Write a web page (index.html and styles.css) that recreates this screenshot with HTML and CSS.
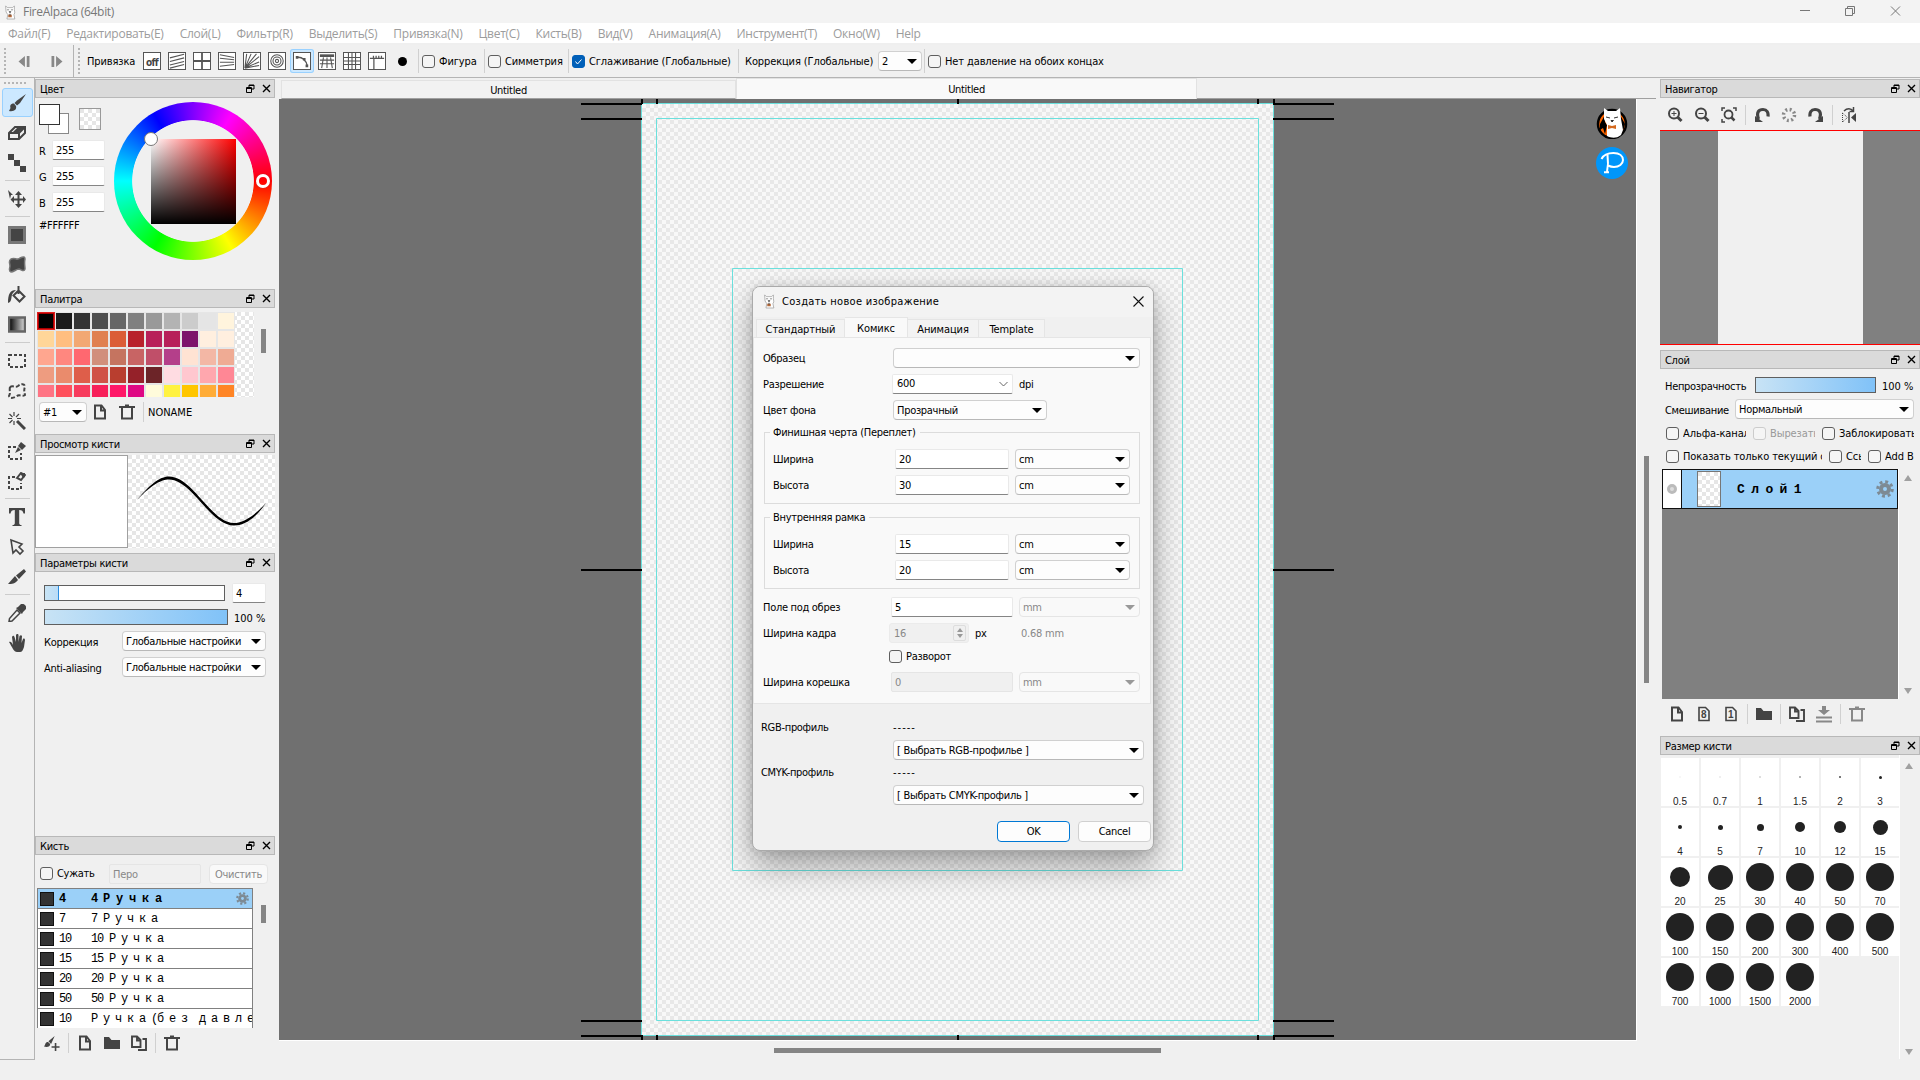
FILE: index.html
```html
<!DOCTYPE html>
<html lang="ru">
<head>
    <meta charset="UTF-8">
    <title>FireAlpaca (64bit)</title>
    <link rel="stylesheet" href="styles.css">
</head>

<body>
    <!-- Icons -->
    <svg class="defs">
        <symbol id="alpaca" viewBox="0 0 16 16">
            <path d="M3 1l2 2h6l2-2v4l.5 4-1 2 1 5h-9l1-5-2-3z" fill="#fff" stroke="#999" stroke-width=".8"/>
            <path d="M4.5 5.5h2.5M9 5.5h2.5M7 7.500h2l-1 1.500z" stroke="#666" stroke-width=".8"/>
            <path d="M6 11h4v3H6z" fill="#b3693a"/>
            <path d="M7.500 10h1v2h-1z" fill="#333"/>
        </symbol>
        <symbol id="float" viewBox="0 0 9 9">
            <path d="M3 3V1h5v4H6M3 1.500h5M.5 3.500h5v5h-5zM.5 4.500h5" fill="none" stroke="#000"/>
        </symbol>
        <symbol id="close" viewBox="0 0 9 9">
            <path d="M1 1l7 7M8 1L1 8" fill="none" stroke="#000" stroke-width="1.400"/>
        </symbol>
        <symbol id="page" viewBox="0 0 16 18">
            <path d="M3 2.500h6.500L13 7v8.500H3zM9 3v4.500h4" fill="none" stroke="#444" stroke-width="2"/>
        </symbol>
        <symbol id="sheet" viewBox="0 0 16 18">
            <path d="M3 2.500h6.500L13 6v9.500H3z" fill="none" stroke="#444" stroke-width="1.600"/>
        </symbol>
        <symbol id="trash" viewBox="0 0 16 18">
            <path d="M0 4h16M6 2.500h4M3 5v10.500h10V5" fill="none" stroke="currentColor" stroke-width="2"/>
        </symbol>
        <symbol id="folder" viewBox="0 0 16 18">
            <path d="M0 3h5l2.500 3H16v9H0z" fill="#444"/>
        </symbol>
        <symbol id="copy" viewBox="0 0 16 18">
            <path d="M1 2.500h5L9.500 6v7H1zM6 3v3.500h4M11.500 5H15v11H7" fill="none" stroke="#444" stroke-width="1.900"/>
        </symbol>
        <symbol id="gear" viewBox="0 0 18 18">
            <circle cx="9" cy="9" r="7.300" fill="none" stroke="#7d8a94" stroke-width="3" stroke-dasharray="2.900 2.830"/>
            <circle cx="9" cy="9" r="4" fill="none" stroke="#7d8a94" stroke-width="4"/>
        </symbol>
    </svg>

    <div class="titlebar">
        <svg class="logo"><use href="#alpaca"/></svg>
        <span>FireAlpaca (64bit)</span>
        <svg class="window-buttons" viewBox="0 0 102 20">
            <path d="M1 8.500h10M46.500 6.500h7v7h-7zM48.500 6.500v-2h7v7h-2M92 4.500l9 9M101 4.500l-9 9" fill="none" stroke="#777"/>
        </svg>
    </div>
    <div class="menubar">
        <span>Файл(F)</span><span>Редактировать(E)</span><span>Слой(L)</span><span>Фильтр(R)</span><span>Выделить(S)</span><span>Привязка(N)</span><span>Цвет(C)</span><span>Кисть(B)</span><span>Вид(V)</span><span>Анимация(A)</span><span>Инструмент(T)</span><span>Окно(W)</span><span>Help</span>
    </div>

    <div class="toolbar">
        <i class="grip"></i>
        <svg class="step" viewBox="0 0 12 12"><path d="M7 0v12L0 6zM9 0h3v12H9z"/></svg>
        <svg class="step" viewBox="0 0 12 12"><path d="M5 0v12l7-6zM0 0h3v12H0z"/></svg>
        <i class="line full"></i>
        <i class="grip"></i>
        <span class="snap-label">Привязка</span>
        <div class="snaps">
            <div class="snap off"><b>off</b></div>
            <div class="snap"><svg viewBox="0 0 18 18"><path d="M1 5.500l16-4M1 9.500l16-4M1 13.500l16-4M1 17l16-4"/></svg></div>
            <div class="snap"><svg viewBox="0 0 18 18"><path d="M9 0v18M0 9h18" stroke-width="2"/></svg></div>
            <div class="snap"><svg viewBox="0 0 18 18"><path d="M1 2l16 3M1 6l16 1.500M1 10.500h16M1 15l16-2"/></svg></div>
            <div class="snap"><svg viewBox="0 0 18 18"><path d="M1 17L3 1M1 17L8 1M1 17L14 1M1 17L17 4M1 17l16-7M1 17l16-3"/></svg></div>
            <div class="snap"><svg viewBox="0 0 18 18"><circle cx="9" cy="9" r="7"/><circle cx="9" cy="9" r="4.500"/><circle cx="9" cy="9" r="1.800"/></svg></div>
            <div class="snap active"><svg viewBox="0 0 18 18"><path d="M3 5c6-1 11 3 12 10" stroke-width="1.600"/><path d="M2 3.500h3v3H2zM10 5.500h3v3h-3zM13 13h3v3h-3z" fill="#555" stroke="none"/></svg></div>
            <div class="snap"><svg viewBox="0 0 18 18"><path d="M1 3h16" stroke-width="3"/><path d="M1 8h16M1 12h16M5 5L3 17M9 5v12M13 5l2 12"/></svg></div>
            <div class="snap"><svg viewBox="0 0 18 18"><path d="M5 0v18M9 0v18M13 0v18M0 5h18M0 9h18M0 13h18"/></svg></div>
            <div class="snap"><svg viewBox="0 0 18 18"><path d="M1 6h16M5.500 6v12M5 3v3M8 3v3M11 3v3M14 3v3" stroke-width="1.400"/></svg></div>
        </div>
        <i class="dot"></i>
        <i class="line"></i>
        <label class="w66"><i class="check"></i>Фигура</label>
        <i class="line"></i>
        <label class="w83"><i class="check"></i>Симметрия</label>
        <i class="line"></i>
        <label class="w170"><i class="check on"><svg viewBox="0 0 13 13"><path d="M3.500 6.500l2 2.500 4-4.500" fill="none" stroke="#fff"/></svg></i>Сглаживание (Глобальные)</label>
        <i class="line"></i>
        <span class="corr">Коррекция (Глобальные)</span>
        <div class="combo corr-combo">2</div>
        <i class="line near"></i>
        <label><i class="check"></i>Нет давление на обоих концах</label>
    </div>

    <div class="main">
        <div class="tools" id="tools">
            <i class="grip-h"></i>
            <div class="tool active"><svg viewBox="0 0 18 18"><path d="M18 0L9 6.500 6.500 9l2.500 2.500L12 9z"/><path d="M6 9.500c-4 0-4 2.500-3.500 4.500L1 17c5 1 8-1.500 7-5z"/></svg></div>
            <div class="tool"><svg viewBox="0 0 18 18"><path d="M1 9l6-6h10v6l-6 6H1z" fill="none" stroke="#444" stroke-width="2"/><path d="M1 9h10l6-6M11 9v6" fill="none" stroke="#444" stroke-width="2"/><path d="M5 8l4-4h7l-5 4z"/></svg></div>
            <div class="tool"><svg viewBox="0 0 18 18"><path d="M0 0h6v6H0zM6 6h6v6H6zM12 12h6v6h-6z"/></svg></div>
            <i class="sep"></i>
            <div class="tool"><svg viewBox="0 0 18 18"><path d="M0 0l5 5H3l-1 4z"/><path d="M10.500 4v11M5 9.500h11" fill="none" stroke="#444" stroke-width="2"/><path d="M10.500 1L14 5H7zM10.500 18L14 14H7zM2.500 9.500L6 6v7zM18 9.500L15 6v7z"/></svg></div>
            <i class="sep"></i>
            <div class="tool"><svg viewBox="0 0 18 18"><path d="M1.500 1.500h15v15h-15z" stroke="#777" stroke-width="3"/></svg></div>
            <div class="tool"><svg viewBox="0 0 18 18"><path d="M3 3c4-2 6 2 9-1 4-2 5-1 5 1-1 4 0 7 0 10-1 3-3 1-6 0-3 0-5 3-8 3-3-1-1-4-1-6 0-3-2-5 1-7z" stroke="#777" stroke-width="1.500"/></svg></div>
            <div class="tool"><svg viewBox="0 0 18 18"><path d="M10.500 4.500l6 6-5 5-6-6zM10.500 8V0" fill="none" stroke="#444" stroke-width="2"/><path d="M0 17C0 8 2 4 8 4L5 7C3 9 4 14 2 16z"/></svg></div>
            <div class="tool"><svg viewBox="0 0 18 18"><defs><linearGradient id="gr"><stop offset="0"/><stop offset="1" stop-color="#ddd"/></linearGradient></defs><path d="M1 1.500h16v14H1z" fill="url(#gr)" stroke="#666" stroke-width="2.500"/></svg></div>
            <i class="sep"></i>
            <div class="tool"><svg viewBox="0 0 18 18"><path d="M1 3h16v12H1z" fill="none" stroke="#444" stroke-width="2" stroke-dasharray="3 2"/></svg></div>
            <div class="tool"><svg viewBox="0 0 18 18"><path d="M2 5c3-2 5 1 8-1 4-3 7-2 7 1-1 2-1 4 0 8-3 2-6-1-8 1-3 2-7 3-8 0 2-4 0-5 1-9z" fill="none" stroke="#444" stroke-width="2" stroke-dasharray="4 2"/></svg></div>
            <div class="tool"><svg viewBox="0 0 18 18"><path d="M9 9l8 8" fill="none" stroke="#444" stroke-width="3"/><path d="M6 0v4M6 9v4M0 6.500h4M9 6.500h4M1.500 2l3 3M11 2L8 5M1.500 11l3-3" fill="none" stroke="#444" stroke-width="1.200"/></svg></div>
            <div class="tool"><svg viewBox="0 0 18 18"><path d="M8 5H1v12h12v-6" fill="none" stroke="#444" stroke-width="2" stroke-dasharray="3 2"/><path d="M13 0l5 4-4 4-4-4zM10 5l3 3-6 3z"/></svg></div>
            <div class="tool"><svg viewBox="0 0 18 18"><path d="M7 5H1v12h12v-6" fill="none" stroke="#444" stroke-width="2" stroke-dasharray="3 2"/><path d="M9 6l4-5 4 2-4 5z" fill="none" stroke="#444" stroke-width="2"/><path d="M12 1h5v4l-2 1z"/></svg></div>
            <i class="sep"></i>
            <div class="tool"><svg viewBox="0 0 18 18"><path d="M1 0h16v5.500h-1.500C15 3 14 2 11.200 2v13c0 1.500.8 2 2.300 2v1h-9v-1c1.500 0 2.300-.5 2.300-2V2C4 2 3 3 2.500 5.500H1z"/></svg></div>
            <div class="tool"><svg viewBox="0 0 18 18"><path d="M3 2l11 4-3 3 4 4-3 3-4-4-3 3z" fill="none" stroke="#444" stroke-width="1.600"/></svg></div>
            <div class="tool"><svg viewBox="0 0 18 18"><path d="M16 1l2 2.500L11 11 8 7.500zM7 8l3 4c-3 4-6 4-10 4z"/></svg></div>
            <i class="sep"></i>
            <div class="tool"><svg viewBox="0 0 18 18"><path d="M9 6l3 3-8 8-3 .500.500-3z" fill="none" stroke="#444" stroke-width="1.500"/><path d="M8 4l2-1 3-3c3-1 6 2 5 5l-3 3-1 2z"/></svg></div>
            <div class="tool"><svg viewBox="0 0 18 18"><path d="M1 8c2-1 3 1 4 3L4 3c1-2 2-1 2.500 0L8 8V1c1-1.500 2-1.500 2.500 0v7l1-6c1-1 2-1 2.500 0l-.5 7L15 5c1-1 2 0 2 1l-1 7c-1 3-2 5-4 5H9c-3 0-5-5-8-10z"/></svg></div>
        </div>

        <div class="dock left">
            <section class="panel color-panel">
                <h2>Цвет<svg class="fl"><use href="#float"/></svg><svg class="cl"><use href="#close"/></svg></h2>
                <div class="color-body">
                    <div class="color-side">
                        <div class="swatches">
                            <div class="fore-back"><i class="back"></i><i class="fore"></i></div>
                            <i class="none checker"></i>
                        </div>
                        <div class="rgb"><span>R</span><div class="input">255</div></div>
                        <div class="rgb"><span>G</span><div class="input">255</div></div>
                        <div class="rgb"><span>B</span><div class="input">255</div></div>
                        <div class="hex">#FFFFFF</div>
                    </div>
                    <div class="wheel">
                        <div class="square"></div>
                        <i class="pick"></i>
                        <i class="hue"></i>
                    </div>
                </div>
            </section>

            <section class="panel palette-panel">
                <h2>Палитра<svg class="fl"><use href="#float"/></svg><svg class="cl"><use href="#close"/></svg></h2>
                <div class="scroll-row">
                    <div class="palette checker" id="palette"></div>
                    <i class="thumb palette-thumb"></i>
                </div>
                <div class="palette-bar">
                    <div class="combo">#1</div>
                    <svg class="icon"><use href="#page"/></svg>
                    <svg class="icon trash"><use href="#trash"/></svg>
                    <i class="bar"></i>
                    <span>NONAME</span>
                </div>
            </section>

            <section class="panel preview-panel">
                <h2>Просмотр кисти<svg class="fl"><use href="#float"/></svg><svg class="cl"><use href="#close"/></svg></h2>
                <div class="preview">
                    <div class="dab"></div>
                    <svg class="stroke checker" viewBox="0 0 147 93">
                        <path d="M9 45C24 27 33 21.500 41 21.500c24 0 42 46.500 65 46.500 8 0 18-5 32-20-12 17-22 22.500-32 22.500C82 70.500 64 24.500 41 24.500c-8 0-17 5-32 20.500z"/>
                    </svg>
                </div>
            </section>

            <section class="panel params-panel">
                <h2>Параметры кисти<svg class="fl"><use href="#float"/></svg><svg class="cl"><use href="#close"/></svg></h2>
                <div class="size-row"><div class="slider"><i></i></div><div class="input">4</div></div>
                <div class="opacity-row"><div class="slider filled"></div><span>100 %</span></div>
                <div class="param"><span>Коррекция</span><div class="combo">Глобальные настройки</div></div>
                <div class="param"><span>Anti-aliasing</span><div class="combo">Глобальные настройки</div></div>
            </section>

            <section class="panel brush-panel">
                <h2>Кисть<svg class="fl"><use href="#float"/></svg><svg class="cl"><use href="#close"/></svg></h2>
                <div class="filter">
                    <label><i class="check"></i>Сужать</label>
                    <div class="input disabled">Перо</div>
                    <div class="clear">Очистить</div>
                </div>
                <div class="scroll-row">
                    <div class="brushes">
                        <div class="brush selected"><i></i><span>4</span><em>4 <u>Ручка</u></em><svg><use href="#gear"/></svg></div>
                        <div class="brush"><i></i><span>7</span><em>7 <u>Ручка</u></em></div>
                        <div class="brush"><i></i><span>10</span><em>10 <u>Ручка</u></em></div>
                        <div class="brush"><i></i><span>15</span><em>15 <u>Ручка</u></em></div>
                        <div class="brush"><i></i><span>20</span><em>20 <u>Ручка</u></em></div>
                        <div class="brush"><i></i><span>50</span><em>50 <u>Ручка</u></em></div>
                        <div class="brush"><i></i><span>10</span><em><u>Ручка</u>(<u>без</u> <u>давле</u></em></div>
                    </div>
                    <i class="thumb brush-thumb"></i>
                </div>
                <div class="brush-bar">
                    <svg class="icon" viewBox="0 0 18 18"><path d="M12 1L5 7l3 3zM4.500 8C1 8 2 11 0 13c4 1 7 0 7-3z" fill="#444"/><path d="M13 9v9M8.500 13.500h9" stroke="#444" stroke-width="1.800"/></svg>
                    <i class="bar"></i>
                    <svg class="icon"><use href="#page"/></svg>
                    <svg class="icon"><use href="#folder"/></svg>
                    <svg class="icon"><use href="#copy"/></svg>
                    <i class="bar"></i>
                    <svg class="icon"><use href="#trash"/></svg>
                </div>
            </section>
        </div>

        <div class="workspace">
            <div class="tabs">
                <div class="tab">Untitled</div>
                <div class="tab current">Untitled</div>
                <div class="rest"></div>
            </div>
            <div class="view">
                <div class="canvas">
                    <div class="sheet"></div>
                    <svg class="guides" viewBox="0 0 1357 941">
                        <g fill="none" stroke="#6be0dd">
                            <path d="M362.500 4.500h632v932h-632zM377.500 19.500h602v902h-602zM453.500 169.500h450v602h-450z"/>
                        </g>
                        <g fill="none" stroke="#000" stroke-width="2">
                            <path d="M302 5h61M302 20h61M302 471h61M302 922h61M302 937h61M994 5h61M994 20h61M994 471h61M994 922h61M994 937h61"/>
                            <path d="M363 0v5M378 0v5M679 0v5M979 0v5M995 0v5M363 936v5M378 936v5M679 936v5M979 936v5M995 936v5"/>
                        </g>
                    </svg>
                    <div class="links">
                        <svg viewBox="0 0 32 32">
                            <circle cx="16" cy="17" r="14" fill="#f60" stroke="#000" stroke-width="2.500"/>
                            <path d="M4 17l6-11-1 9 2 3-2 9-2-6-3 2zM29 17l-6-11 2 8-1 5 2 8 2-6z"/>
                            <path d="M8 1l4 3h8l4-3 1 11 2 11-2 5c-5 4-10 3-14 1V18l-3-6z" fill="#fff"/>
                            <path d="M10 10l4 1M18 11l4-1M15 13.500h2.500L16 15z" fill="none" stroke="#333"/>
                            <path d="M12 18l4 1 4-1v4l-4-1-4 1z" fill="#d4691e"/>
                        </svg>
                        <svg viewBox="0 0 32 32">
                            <circle cx="16" cy="16" r="16" fill="#0096fa"/>
                            <path d="M5.500 12c2-4 7-6 12-6 6 0 9.500 3 9.500 7s-4 7-9 7c-2 0-4-.5-6-1.500M11.500 8c1 7 .5 12-.5 17M8 25.200h5" fill="none" stroke="#fff" stroke-width="2"/>
                        </svg>
                    </div>
                </div>
                <i class="thumb v-thumb"></i>
            </div>
            <i class="thumb h-thumb"></i>
        </div>

        <div class="dock right">
            <section class="panel nav-panel">
                <h2>Навигатор<svg class="fl"><use href="#float"/></svg><svg class="cl"><use href="#close"/></svg></h2>
                <div class="nav-bar">
                    <svg viewBox="0 0 16 16"><circle cx="7" cy="6.500" r="5" fill="none" stroke="#444" stroke-width="2"/><path d="M10.500 10l4 4" stroke="#444" stroke-width="3"/><path d="M4.500 6.500h5M7 4v5" stroke="#444"/></svg>
                    <svg viewBox="0 0 16 16"><circle cx="7" cy="6.500" r="5" fill="none" stroke="#444" stroke-width="2"/><path d="M10.500 10l4 4" stroke="#444" stroke-width="3"/><path d="M4.500 6.500h5" stroke="#444"/></svg>
                    <svg viewBox="0 0 16 16"><circle cx="7.500" cy="7.500" r="4" fill="none" stroke="#444" stroke-width="1.800"/><path d="M10.500 10.500l3 3" stroke="#444" stroke-width="2.500"/><path d="M1 4V1h3M12 1h3v3M1 12v3h3" fill="none" stroke="#444" stroke-width="1.500"/></svg>
                    <i class="bar"></i>
                    <svg viewBox="0 0 16 16"><path d="M4.500 12C2 5 5 2.500 9 2.500c4 0 5.500 3 5 7" fill="none" stroke="#444" stroke-width="3.200"/><path d="M1 9v6h8z" fill="#444"/></svg>
                    <svg viewBox="0 0 16 16"><circle cx="8" cy="8" r="5.500" fill="none" stroke="#888" stroke-width="3.500" stroke-dasharray="1.900 2.420"/></svg>
                    <svg viewBox="0 0 16 16"><path d="M11.500 12C14 5 11 2.500 7 2.500c-4 0-5.500 3-5 7" fill="none" stroke="#444" stroke-width="3.200"/><path d="M15 9v6H7z" fill="#444"/></svg>
                    <i class="bar"></i>
                    <svg viewBox="0 0 16 16"><path d="M8 5v11" stroke="#444" stroke-width="1.500"/><path d="M15 6v9l-5-4.500z" fill="#444"/><path d="M1.500 6v9l5-4.500z" fill="none" stroke="#444" stroke-dasharray="1 1"/><path d="M3 4c3-3 7-3 9 0M12.500 0v4.500H8.500" fill="none" stroke="#444" stroke-width="1.500"/></svg>
                </div>
                <div class="nav-view"><div></div></div>
            </section>

            <section class="panel layer-panel">
                <h2>Слой<svg class="fl"><use href="#float"/></svg><svg class="cl"><use href="#close"/></svg></h2>
                <div class="lay-opacity"><span>Непрозрачность</span><div class="slider filled"></div><em>100 %</em></div>
                <div class="lay-blend"><span>Смешивание</span><div class="combo">Нормальный</div></div>
                <div class="lay-checks">
                    <label class="alpha"><i class="check"></i><span>Альфа-канал</span></label>
                    <label class="clip disabled"><i class="check"></i><span>Вырезать</span></label>
                    <label class="lock"><i class="check"></i><span>Заблокировать</span></label>
                </div>
                <div class="lay-checks second">
                    <label class="only"><i class="check"></i><span>Показать только текущий слой</span></label>
                    <label class="ref"><i class="check"></i><span>Ссылка</span></label>
                    <label class="add"><i class="check"></i><span>Add B</span></label>
                </div>
                <div class="scroll-row">
                    <div class="layers">
                        <div class="layer">
                            <div class="eye"><i></i></div>
                            <i class="layer-thumb checker"></i>
                            <b><u>Слой</u>1</b>
                            <svg><use href="#gear"/></svg>
                        </div>
                    </div>
                    <div class="arrows"><i class="up"></i><i class="down"></i></div>
                </div>
                <div class="layer-bar">
                    <svg class="icon"><use href="#page"/></svg>
                    <div class="icon numbered"><svg class="icon"><use href="#sheet"/></svg><b>8</b></div>
                    <div class="icon numbered"><svg class="icon"><use href="#sheet"/></svg><b>1</b></div>
                    <i class="bar"></i>
                    <svg class="icon"><use href="#folder"/></svg>
                    <i class="bar"></i>
                    <svg class="icon"><use href="#copy"/></svg>
                    <svg class="icon" viewBox="0 0 16 18"><path d="M6 1h4v4h4L8 10 2 5h4zM0 11.500h16v2H0zM0 15.500h16v2H0z" fill="#888"/></svg>
                    <i class="bar"></i>
                    <svg class="icon muted"><use href="#trash"/></svg>
                </div>
            </section>

            <section class="panel size-panel">
                <h2>Размер кисти<svg class="fl"><use href="#float"/></svg><svg class="cl"><use href="#close"/></svg></h2>
                <div class="scroll-row">
                    <div class="sizes" id="sizes"></div>
                    <div class="arrows"><i class="up"></i><i class="down"></i></div>
                </div>
            </section>
        </div>
    </div>

    <div class="dialog">
        <div class="dialog-title">
            <svg class="logo"><use href="#alpaca"/></svg>
            <span>Создать новое изображение</span>
            <svg class="x" viewBox="0 0 11 11"><path d="M.5.500l10 10M10.500.500l-10 10" stroke="#111" stroke-width="1.100"/></svg>
        </div>
        <div class="dialog-tabs">
            <div class="dtab t1">Стандартный</div>
            <div class="dtab t2 current">Комикс</div>
            <div class="dtab t3">Анимация</div>
            <div class="dtab t4">Template</div>
        </div>
        <div class="pane">
            <div class="field"><span>Образец</span><div class="combo w247"></div></div>
            <div class="field"><span>Разрешение</span><div class="input editable">600<svg viewBox="0 0 9 6"><path d="M.5 1l4 4 4-4" fill="none" stroke="#666"/></svg></div><span class="unit">dpi</span></div>
            <div class="field"><span>Цвет фона</span><div class="combo w154">Прозрачный</div></div>
            <div class="group">
                <div class="legend">Финишная черта (Переплет)</div>
                <div class="field"><span>Ширина</span><div class="input">20</div><div class="combo">cm</div></div>
                <div class="field"><span>Высота</span><div class="input">30</div><div class="combo">cm</div></div>
            </div>
            <div class="group">
                <div class="legend">Внутренняя рамка</div>
                <div class="field"><span>Ширина</span><div class="input">15</div><div class="combo">cm</div></div>
                <div class="field"><span>Высота</span><div class="input">20</div><div class="combo">cm</div></div>
            </div>
            <div class="field bleed"><span>Поле под обрез</span><div class="input">5</div><div class="combo disabled">mm</div></div>
            <div class="field frame"><span>Ширина кадра</span><div class="spin">16<div class="spin-buttons"><i class="up"></i><i class="down"></i></div></div><span class="unit">px</span><span class="mm">0.68 mm</span></div>
            <label class="spread"><i class="check"></i>Разворот</label>
            <div class="field bleed"><span>Ширина корешка</span><div class="input disabled">0</div><div class="combo disabled">mm</div></div>
        </div>
        <div class="profiles">
            <div class="profile"><span>RGB-профиль</span><em>-----</em></div>
            <div class="combo">[ Выбрать RGB-профилье ]</div>
            <div class="profile"><span>CMYK-профиль</span><em>-----</em></div>
            <div class="combo">[ Выбрать CMYK-профиль ]</div>
        </div>
        <div class="buttons">
            <div class="btn ok">OK</div>
            <div class="btn">Cancel</div>
        </div>
    </div>

    <script>
        const colors = [
            '#000000', '#1a1a1a', '#333333', '#4d4d4d', '#666666', '#808080', '#999999', '#b3b3b3', '#cccccc', '#e5e5e5', '#fff4dd',
            '#ffd699', '#ffbe80', '#f2a873', '#e08050', '#db5d36', '#b8222c', '#b82059', '#b72059', '#7c136c', '#ffefdf', '#ffefdf',
            '#ffa68f', '#ff877f', '#ff6870', '#d18f7c', '#c57460', '#c86464', '#c04f69', '#b43f8a', '#ffe3d3', '#f3b7a5', '#efab94',
            '#ee9c80', '#ea8b6c', '#de5e4a', '#d05248', '#b93e2f', '#952129', '#6c2428', '#ffdce2', '#ffc7cf', '#ffa7ae', '#ff8795',
            '#ff7484', '#ff505c', '#f73c5d', '#f7205a', '#ff1768', '#df0884', '#fffbdb', '#fff240', '#ffc600', '#ffac37', '#ff8526'
        ];
        const palette = document.getElementById('palette');
        colors.forEach((color, index) => {
            palette.innerHTML += `<i class="${index === 0 ? 'picked' : ''}" style="background-color: ${color}"></i>`;
        });

        const sizes = [0.5, 0.7, 1, 1.5, 2, 3, 4, 5, 7, 10, 12, 15, 20, 25, 30, 40, 50, 70, 100, 150, 200, 300, 400, 500, 700, 1000, 1500, 2000];
        const sizeGrid = document.getElementById('sizes');
        sizes.forEach(size => {
            const d = Math.min(size, 28);
            // thin brushes fade out instead of shrinking below a pixel
            const opacity = size < 3 ? size * size / 5 : 1;
            sizeGrid.innerHTML += `
                <div class="size">
                    <div><i style="width: ${Math.max(d, 2)}px; height: ${Math.max(d, 2)}px; opacity: ${opacity}"></i></div>
                    <span>${size}</span>
                </div>
            `;
        });
    </script>
</body>
</html>
```

FILE: styles.css
```css
* {
    box-sizing: border-box;
}

body {
    margin: 0;
    width: 1920px;
    height: 1080px;
    overflow: hidden;
    display: flex;
    flex-direction: column;
    background-color: #f0f0f0;
    color: #000;
    font-family: "DejaVu Sans Condensed", "DejaVu Sans", sans-serif;
    font-size: 11px;
    letter-spacing: -0.3px;
    white-space: nowrap;
    cursor: default;
}

i, em {
    font-style: normal;
}

u {
    text-decoration: none;
}

i {
    display: block;
}

svg {
    display: block;
    flex: none;
}

.defs {
    position: absolute;
    width: 0;
    height: 0;
}

.checker {
    background: repeating-conic-gradient(#fff 0 25%, #e6e6e6 0 50%) 0 0 / 8px 8px;
}

/* Title and menu */

.titlebar {
    height: 23px;
    display: flex;
    align-items: center;
    padding-left: 3px;
    background-color: #f3f3f3;
    color: #777;
    font-family: "Open Sans", sans-serif;
    font-size: 12px;
}

.logo {
    width: 14px;
    height: 16px;
    margin-right: 6px;
}

.window-buttons {
    width: 102px;
    height: 20px;
    margin: 0 19px 0 auto;
}

.menubar {
    height: 22px;
    display: flex;
    gap: 16px;
    padding: 2px 8px 0;
    background-color: #fff;
    border-bottom: 2px solid #efefef;
    color: #9c9c9c;
    font-family: "Open Sans", sans-serif;
    font-size: 12px;
    line-height: 18px;
    letter-spacing: -0.26px;
}

/* Toolbar */

.toolbar {
    height: 33px;
    display: flex;
    align-items: center;
    border-bottom: 1px solid #b4b4b4;
    letter-spacing: -0.12px;
}

.grip {
    width: 2px;
    height: 27px;
    margin-left: 4px;
    background: repeating-linear-gradient(#b5b5b5 0 2px, transparent 2px 4px);
}

.step {
    width: 12px;
    height: 11px;
    margin-left: 12px;
    fill: #888;
}

.step + .step {
    margin-left: 21px;
}

.line {
    width: 1px;
    height: 24px;
    background-color: #d0d0d0;
}

.line.full {
    height: 32px;
    margin-left: 10px;
    background-color: #b4b4b4;
}

.snap-label {
    width: 53px;
    margin-left: 7px;
    padding-top: 1px;
}

.snaps {
    display: flex;
    gap: 1px;
}

.snap {
    width: 24px;
    height: 24px;
    padding: 3px;
    border-radius: 3px;
}

.snap svg {
    width: 18px;
    height: 18px;
    background-color: #fff;
    border: 1.5px solid #555;
    fill: none;
    stroke: #555;
    stroke-width: 1.2;
}

.snap.active {
    background-color: #cce8ff;
    box-shadow: inset 0 0 0 1px #99d1ff;
}

.snap.off b {
    display: block;
    height: 18px;
    border: 1px solid #555;
    background-color: #fff;
    color: #444;
    font-size: 10px;
    line-height: 20px;
    text-align: center;
    letter-spacing: -0.6px;
}

.dot {
    width: 9px;
    height: 9px;
    margin: 0 11px 0 9px;
    border-radius: 50%;
    background-color: #000;
}

label {
    display: flex;
    align-items: center;
}

.toolbar label {
    padding-left: 3px;
}

.w66 {
    width: 65px;
}

.w83 {
    width: 83px;
}

.w170 {
    width: 169px;
}

.check {
    flex: none;
    width: 13px;
    height: 13px;
    margin-right: 4px;
    border: 1px solid #5f5f5f;
    border-radius: 3px;
    background-color: #f5f5f5;
}

.check.on {
    background-color: #005fb8;
    border-color: #005fb8;
}

.check.on svg {
    width: 13px;
    height: 13px;
    margin: -1px;
}

.corr {
    width: 139px;
    padding: 1px 0 0 6px;
}

.combo {
    position: relative;
    height: 20px;
    padding-left: 3px;
    border: 1px solid #d0d0d0;
    border-bottom-color: #b8b8b8;
    border-radius: 4px;
    background-color: #fdfdfd;
    line-height: 20px;
}

.combo::after {
    content: "";
    position: absolute;
    right: 4px;
    top: 7px;
    border: 5px solid transparent;
    border-top: 5px solid #000;
    border-bottom: 0;
}

.combo.disabled {
    background-color: #f9f9f9;
    border-color: #e5e5e5;
    color: #888;
}

.combo.disabled::after {
    border-top-color: #999;
}

.corr-combo {
    width: 44px;
    margin-right: 2px;
}

.input {
    height: 20px;
    padding-left: 3px;
    border: 1px solid #e9e9e9;
    border-bottom-color: #858585;
    border-radius: 2px;
    background-color: #fff;
    line-height: 20px;
}

.input.disabled {
    border-color: #e5e5e5;
    background-color: #f0f0f0;
    color: #888;
}

/* Main area */

.main {
    height: 1002px;
    display: flex;
}

.tools {
    width: 35px;
    height: 982px;
    padding-top: 3px;
    border-right: 1px solid #b4b4b4;
    border-bottom: 1px solid #b4b4b4;
}

.grip-h {
    width: 23px;
    height: 2px;
    margin: 1px 0 4px 4px;
    background: repeating-linear-gradient(90deg, #b5b5b5 0 2px, transparent 2px 4px);
}

.tool {
    width: 31px;
    height: 30px;
    margin-left: 2px;
    padding-right: 1px;
    display: flex;
    align-items: center;
    justify-content: center;
    border-radius: 3px;
}

.tool.active {
    height: 29px;
    margin-bottom: 1px;
    background-color: #cce8ff;
    border: 1px solid #99d1ff;
}

.tool svg {
    width: 18px;
    height: 18px;
    fill: #444;
}

.sep {
    width: 25px;
    height: 1px;
    margin: 2px 5px 3px;
    background-color: #ccc;
}

.dock {
    padding-top: 1px;
}

.left {
    width: 244px;
}

.right {
    width: 260px;
    margin-left: 4px;
}

.panel h2 {
    height: 19px;
    width: 240px;
    display: flex;
    align-items: center;
    margin: 0;
    padding: 2px 3px 0 4px;
    border: 1px solid #b8b8b8;
    background-color: #dadada;
    font-size: 11px;
    font-weight: normal;
}

.right .panel h2 {
    width: 260px;
}

h2 svg {
    width: 9px;
    height: 9px;
    margin-top: -2px;
}

h2 .fl {
    margin: -2px 7px 0 auto;
}

.scroll-row {
    display: flex;
}

.thumb {
    flex: none;
    width: 5px;
    background-color: #858585;
}

.icon {
    width: 16px;
    height: 18px;
    color: #444;
}

.bar {
    width: 1px;
    height: 20px;
    background-color: #d0d0d0;
}

/* Color */

.color-panel {
    height: 210px;
}

.color-body {
    display: flex;
    padding: 4px 0 0 4px;
}

.color-side {
    width: 75px;
}

.swatches {
    display: flex;
    gap: 10px;
    padding-top: 2px;
    height: 38px;
}

.fore-back {
    position: relative;
    width: 30px;
    height: 30px;
}

.fore, .back {
    position: absolute;
    width: 21px;
    height: 21px;
    background-color: #fff;
}

.fore {
    left: 0;
    top: 0;
    border: 1px solid #333;
}

.back {
    right: 0;
    bottom: 0;
    border: 1px solid #888;
}

.none {
    width: 22px;
    height: 22px;
    margin-top: 4px;
    border: 1px solid #999;
}

.rgb {
    display: flex;
    align-items: center;
    height: 20px;
    margin-bottom: 6px;
}

.rgb span {
    width: 13px;
    padding-top: 2px;
}

.rgb .input {
    width: 53px;
}

.hex {
    height: 14px;
    padding-top: 1px;
}

.wheel {
    position: relative;
    width: 158px;
    height: 158px;
    padding: 37px;
    border-radius: 50%;
    background: radial-gradient(closest-side, #f0f0f0 76.5%, transparent 77.5%), conic-gradient(from 90deg, red, yellow, lime, cyan, blue, magenta, red);
}

.square {
    width: 85px;
    height: 85px;
    background: linear-gradient(to top, #000, transparent), linear-gradient(to right, #fff, red);
}

.pick, .hue {
    position: absolute;
    width: 14px;
    height: 14px;
    border-radius: 50%;
}

.pick {
    left: 30px;
    top: 30px;
    background-color: #fff;
    border: 1px solid #777;
}

.hue {
    left: 142px;
    top: 72px;
    border: 3px solid #fff;
    box-shadow: 0 0 1px #555;
}

/* Palette */

.palette-panel {
    height: 145px;
}

.palette {
    display: grid;
    grid-template-columns: repeat(11, 16px);
    grid-auto-rows: 16px;
    gap: 2px;
    width: 217px;
    height: 85px;
    margin: 4px 7px 0 2px;
    padding: 1px;
    overflow: hidden;
}

.palette i {
    box-shadow: 0 0 0 1px #e6e6e6;
}

.palette .picked {
    box-shadow: 0 0 0 1px #e01b1b, inset 0 0 0 1px #a00;
    z-index: 1;
}

.palette-thumb {
    height: 24px;
    margin-top: 21px;
}

.palette-bar {
    display: flex;
    align-items: center;
    padding: 5px 0 0 4px;
}

.palette-bar .combo {
    width: 48px;
    margin-right: 5px;
}

.palette-bar .trash {
    margin: 0 8px 0 11px;
}

.palette-bar span {
    margin-left: 4px;
    padding-top: 1px;
    letter-spacing: 0;
}

/* Brush preview */

.preview-panel {
    height: 119px;
}

.preview {
    display: flex;
    padding-top: 2px;
}

.dab {
    width: 93px;
    height: 93px;
    border: 1px solid #a0a0a0;
    background-color: #fff;
}

.stroke {
    width: 147px;
    height: 93px;
}

/* Brush parameters */

.params-panel {
    height: 283px;
}

.slider {
    height: 16px;
    border: 1px solid #5f5f5f;
    background-color: #fff;
}

.slider i {
    width: 14px;
    height: 14px;
    border-right: 1px solid #2a8de0;
    background: linear-gradient(90deg, #c8e4f5, #b9dcf7);
}

.slider.filled {
    background: linear-gradient(90deg, #c8e3f5, #80c2f8);
}

.size-row, .opacity-row, .param {
    display: flex;
    align-items: center;
    padding-left: 9px;
}

.size-row {
    margin-top: 11px;
}

.size-row .slider {
    width: 181px;
    margin-right: 7px;
}

.size-row .input {
    width: 34px;
}

.opacity-row {
    height: 16px;
    margin: 6px 0;
}

.opacity-row .slider {
    width: 184px;
    margin-right: 6px;
}

.opacity-row span {
    padding-top: 2px;
    letter-spacing: 0;
}

.param {
    margin-bottom: 6px;
}

.param span {
    width: 78px;
    padding-top: 2px;
}

.param .combo {
    width: 144px;
}

/* Brush list */

.filter {
    display: flex;
    align-items: center;
    height: 33px;
    padding: 4px 0 0 5px;
}

.filter label {
    width: 69px;
}

.filter .input {
    width: 92px;
    margin-right: 8px;
}

.clear {
    width: 59px;
    height: 20px;
    border: 1px solid #e5e5e5;
    border-radius: 4px;
    background-color: #f9f9f9;
    color: #888;
    line-height: 19px;
    text-align: center;
}

.brushes {
    width: 216px;
    height: 140px;
    margin: 0 8px 0 2px;
    border: 1px solid #808080;
    border-bottom: 0;
    overflow: hidden;
    background-color: #fff;
    font-family: "Liberation Mono", monospace;
    font-size: 12px;
    letter-spacing: -1.2px;
}

.brush {
    height: 20px;
    display: flex;
    align-items: center;
    padding-left: 2px;
    border-bottom: 1px solid #808080;
}

.brush.selected {
    background-color: #9bd0f8;
    font-weight: bold;
}

.brush i {
    width: 14px;
    height: 14px;
    margin-right: 5px;
    border: 1px solid #111;
    background-color: #333;
}

.brush span {
    width: 32px;
}

.brush em {
    width: 145px;
}

.brush u {
    letter-spacing: 4.8px;
}

.brush.selected u {
    letter-spacing: 5.8px;
}

.brush svg {
    width: 13px;
    height: 13px;
}

.brush-thumb {
    height: 18px;
    margin-top: 17px;
}

.brush-bar {
    display: flex;
    align-items: center;
    gap: 8px;
    padding: 5px 0 0 9px;
}

.brush-bar .icon + .icon {
    margin-left: 3px;
}

/* Workspace */

.workspace {
    width: 1377px;
}

.tabs {
    display: flex;
    align-items: flex-end;
    height: 21px;
    padding-left: 2px;
    text-align: center;
    line-height: 19px;
}

.tab {
    width: 455px;
    height: 19px;
    border: 1px solid #e2e2e2;
    border-bottom-color: #a0a0a0;
    background-color: #f2f2f2;
}

.tab.current {
    width: 461px;
    height: 21px;
    border-bottom: 0;
    background-color: #f9f9f9;
    line-height: 21px;
}

.rest {
    flex: 1;
    height: 1px;
    background-color: #a0a0a0;
}

.view {
    display: flex;
    height: 942px;
}

.canvas {
    position: relative;
    width: 1358px;
    height: 942px;
    border-right: 1px solid #fff;
    border-bottom: 1px solid #fff;
    background-color: #707070;
}

.sheet {
    width: 632px;
    height: 931px;
    margin-left: 363px;
    position: relative;
    top: 5px;
    background: repeating-conic-gradient(#e8e8e8 0 25%, #f8f8f8 0 50%) 0 0 / 8px 8px;
}

.guides {
    position: absolute;
    left: 0;
    top: 0;
    width: 1357px;
    height: 941px;
}

.links {
    position: absolute;
    right: 8px;
    top: 8px;
    display: grid;
    gap: 8px;
}

.links svg {
    width: 32px;
    height: 32px;
}

.v-thumb {
    height: 227px;
    margin: 357px 0 0 7px;
}

.h-thumb {
    width: 387px;
    height: 5px;
    margin: 7px 0 0 495px;
}

/* Navigator */

.nav-panel {
    height: 271px;
}

.nav-bar {
    height: 32px;
    display: flex;
    align-items: center;
    gap: 11px;
    padding: 2px 0 0 7px;
}

.nav-bar svg {
    width: 16px;
    height: 16px;
}

.nav-bar .bar {
    margin: 0 -3px;
}

.nav-view {
    height: 215px;
    padding: 0 57px 0 58px;
    border: 1px solid red;
    border-width: 1px 0;
    background-color: #808080;
}

.nav-view div {
    height: 100%;
    background-color: #f0f0f0;
}

/* Layers */

.layer-panel {
    height: 386px;
}

.lay-opacity, .lay-blend {
    display: flex;
    align-items: center;
    padding-left: 5px;
}

.lay-opacity {
    height: 16px;
    margin: 8px 0 6px;
}

.lay-opacity span {
    width: 90px;
    padding-top: 2px;
}

.lay-opacity .slider {
    width: 121px;
    margin-right: 6px;
}

.lay-opacity em {
    padding-top: 2px;
    letter-spacing: 0;
}

.lay-blend span {
    width: 70px;
    padding-top: 2px;
}

.lay-blend .combo {
    width: 179px;
}

.lay-checks {
    display: flex;
    height: 13px;
    margin: 8px 0 10px 6px;
    gap: 7px;
    letter-spacing: -0.1px;
}

.lay-checks.second {
    margin-bottom: 6px;
}

.lay-checks span {
    overflow: hidden;
}

.lay-checks .disabled {
    color: #999;
}

.lay-checks .disabled .check {
    border-color: #ccc;
}

.alpha {
    width: 80px;
}

.clip {
    width: 62px;
}

.lock {
    width: 92px;
}

.only {
    width: 156px;
}

.ref {
    width: 32px;
}

.add {
    width: 50px;
}

.layers {
    width: 237px;
    height: 230px;
    margin: 0 0 0 2px;
    border-right: 1px solid #fff;
    background-color: #808080;
}

.layer {
    height: 40px;
    display: flex;
    align-items: center;
    border: 1px solid #111;
    background-color: #9bd0f8;
    font-family: "Liberation Mono", monospace;
    font-size: 13px;
}

.layer u {
    letter-spacing: 6.4px;
}

.eye {
    width: 19px;
    height: 38px;
    display: flex;
    align-items: center;
    justify-content: center;
    border-right: 1px solid #111;
    background-color: #fff;
}

.eye i {
    width: 10px;
    height: 10px;
    border: 3px solid #bbb;
    border-radius: 50%;
    background-color: #ddd;
}

.layer-thumb {
    width: 24px;
    height: 36px;
    margin: 0 16px 0 15px;
    border: 1px solid #777;
}

.layer svg {
    width: 18px;
    height: 18px;
    margin: 0 3px 0 auto;
}

.arrows {
    display: flex;
    flex-direction: column;
    justify-content: space-between;
    padding: 6px 0 5px 5px;
}

.up, .down {
    border: 4px solid transparent;
}

.up {
    border-top: 0;
    border-bottom: 6px solid #a0a0a0;
}

.down {
    border-bottom: 0;
    border-top: 6px solid #a0a0a0;
}

.layer-bar {
    height: 30px;
    display: flex;
    align-items: center;
    gap: 11px;
    padding-left: 9px;
}

.layer-bar .bar {
    margin: 0 -3px;
}

.numbered {
    position: relative;
}

.numbered b {
    position: absolute;
    left: 5px;
    top: 5px;
    font-family: "Liberation Sans", sans-serif;
    font-size: 10px;
    line-height: 10px;
}

.muted {
    color: #888;
}

/* Brush sizes */

.sizes {
    display: grid;
    grid-template-columns: repeat(6, 38px);
    grid-auto-rows: 48px;
    gap: 2px;
    width: 240px;
    height: 304px;
    padding: 3px 0 0 1px;
    border-right: 1px solid #fff;
}

.size {
    background-color: #fff;
    color: #222;
    text-align: center;
    font-family: "Liberation Sans", sans-serif;
    font-size: 10px;
    letter-spacing: 0;
    line-height: 11px;
}

.size div {
    height: 38px;
    display: flex;
    align-items: center;
    justify-content: center;
}

.size i {
    border-radius: 50%;
    background-color: #222;
}

.size-panel .arrows {
    padding: 8px 0 4px 5px;
}

/* New image dialog */

.dialog {
    position: absolute;
    left: 752px;
    top: 286px;
    width: 402px;
    height: 565px;
    border: 1px solid #aaa;
    border-radius: 8px;
    background-color: #f0f0f0;
    box-shadow: 0 16px 32px rgba(0, 0, 0, 0.32), 0 0 12px rgba(0, 0, 0, 0.12);
    overflow: hidden;
}

.dialog-title {
    height: 30px;
    display: flex;
    align-items: center;
    padding: 0 9px 2px 9px;
    background-color: #f3f3f3;
    letter-spacing: 0.3px;
}

.dialog-title .x {
    width: 11px;
    height: 11px;
    margin-left: auto;
}

.dialog-tabs {
    display: flex;
    align-items: flex-end;
    height: 20px;
    padding-left: 3px;
    text-align: center;
    letter-spacing: -0.1px;
}

.dtab {
    height: 18px;
    border: 1px solid #e5e5e5;
    border-left-width: 0;
    border-bottom: 0;
    background-color: #f3f3f3;
    line-height: 19px;
}

.dtab.current {
    height: 20px;
    background-color: #f9f9f9;
    line-height: 21px;
}

.t1 {
    width: 89px;
    border-left-width: 1px;
}

.t2 {
    width: 63px;
}

.t3 {
    width: 71px;
}

.t4 {
    width: 66px;
}

.pane {
    width: 398px;
    height: 367px;
    padding: 10px 0 0 9px;
    border: 1px solid #e5e5e5;
    background-color: #f9f9f9;
}

.field {
    display: flex;
    align-items: center;
    height: 20px;
    margin-bottom: 6px;
}

.field span {
    padding-top: 1px;
}

.field span:first-child {
    width: 130px;
}

.w247 {
    width: 247px;
}

.w154 {
    width: 154px;
}

.field .unit {
    padding-left: 6px;
}

.editable {
    width: 121px;
    margin-left: -1px;
    padding: 0 4px 0 4px;
    display: flex;
    align-items: center;
    justify-content: space-between;
}

.editable svg {
    width: 9px;
    height: 6px;
}

.group {
    width: 376px;
    height: 72px;
    margin: 12px 0 13px 1px;
    border: 1px solid #dcdcdc;
}

.group .legend {
    width: fit-content;
    height: 14px;
    margin: -7px 0 9px 5px;
    padding: 0 4px 0 3px;
    background-color: #f9f9f9;
}

.group .field {
    padding-left: 8px;
}

.group .field span:first-child {
    width: 122px;
}

.group .input {
    width: 114px;
    margin-right: 6px;
}

.group .combo {
    width: 115px;
}

.group + .bleed {
    margin-top: -5px;
}

.bleed .input {
    width: 122px;
    margin: 0 6px 0 -2px;
}

.bleed .combo {
    width: 121px;
}

.frame span:first-child {
    width: 126px;
}

.spin {
    width: 80px;
    height: 20px;
    display: flex;
    align-items: center;
    justify-content: space-between;
    padding: 0 2px 0 4px;
    border: 1px solid #ebebeb;
    border-radius: 3px;
    background-color: #f0f0f0;
    color: #888;
}

.spin-buttons {
    width: 13px;
    height: 16px;
    display: flex;
    flex-direction: column;
    align-items: center;
    justify-content: space-between;
    padding: 2px 0;
    border: 1px solid #ddd;
    border-radius: 2px;
}

.spin-buttons i {
    border-width: 3px;
}

.spin-buttons .up {
    border-bottom: 4px solid #999;
}

.spin-buttons .down {
    border-top: 4px solid #999;
}

.frame .mm {
    margin-left: auto;
    margin-right: 86px;
    color: #888;
    letter-spacing: -0.2px;
}

.spread {
    height: 17px;
    margin: -1px 0 7px 126px;
}

.profiles {
    padding: 15px 0 0 8px;
}

.profiles .combo {
    width: 251px;
    margin: 5px 0 4px 132px;
}

.profiles .combo:last-child {
    margin-bottom: 5px;
}

.profile {
    display: flex;
    align-items: center;
    height: 16px;
}

.profile span {
    width: 132px;
}

.profile em {
    letter-spacing: 1px;
}

.buttons {
    display: flex;
    justify-content: flex-end;
    gap: 8px;
    padding: 11px 2px 0 0;
}

.btn {
    width: 73px;
    height: 21px;
    border: 1px solid #d0d0d0;
    border-radius: 4px;
    background-color: #fdfdfd;
    line-height: 19px;
    text-align: center;
}

.btn.ok {
    border: 1px solid #0078d4;
}
```
